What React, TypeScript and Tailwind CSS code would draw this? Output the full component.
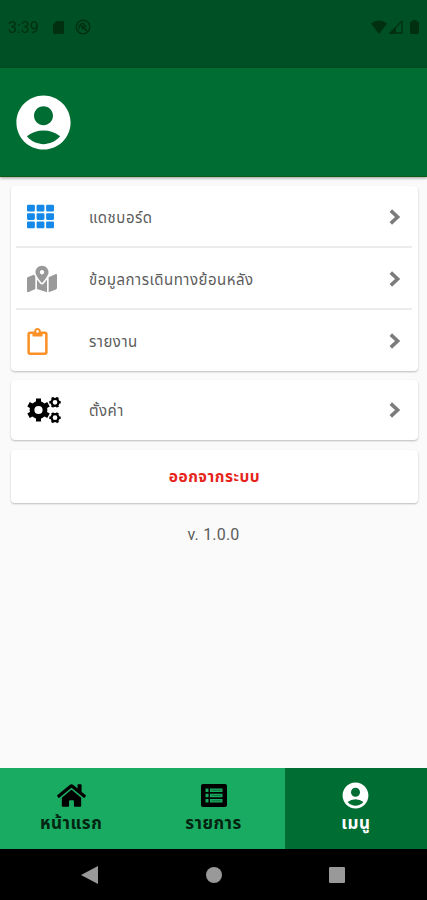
import type { ReactNode } from "react";
import { FaHome, FaMapMarkedAlt, FaRegClipboard, FaTh } from "react-icons/fa";
import { MdAccountCircle } from "react-icons/md";

type MenuRowProps = {
  icon: ReactNode;
  label: string;
  className: string;
};

function ChevronIcon() {
  return (
    <svg width="12" height="16" viewBox="0 0 12 16" fill="none" stroke="#7c7c7c" strokeWidth="3.600">
      <path d="M1.800 1.600L8.600 8l-6.800 6.400" />
    </svg>
  );
}

function GearsIcon() {
  return (
    <svg width="34" height="28" viewBox="0 0 34 28" fill="none" stroke="#000">
      <circle cx="11.500" cy="14" r="6.500" strokeWidth="4.800" />
      <g strokeWidth="5">
        <path d="M11.500 2.500v5M11.500 20.500v5" />
        <path d="M11.500 2.500v5M11.500 20.500v5" transform="rotate(60 11.500 14)" />
        <path d="M11.500 2.500v5M11.500 20.500v5" transform="rotate(120 11.500 14)" />
      </g>
      <circle cx="28" cy="6.300" r="3.500" strokeWidth="2.300" />
      <circle cx="28" cy="21.700" r="3.500" strokeWidth="2.300" />
      <g strokeWidth="2.600">
        <path d="M22.300 6.300h2M31.700 6.300h2M25.200 1.400l1 1.700M29.900 9.500l1 1.700M30.800 1.400l-1 1.700M26.100 9.500l-1 1.700" />
        <path d="M22.300 21.700h2M31.700 21.700h2M25.200 16.800l1 1.700M29.900 24.900l1 1.700M30.800 16.800l-1 1.700M26.100 24.900l-1 1.700" />
      </g>
    </svg>
  );
}

function ListIcon() {
  return (
    <svg width="26" height="23" viewBox="0 0 26 23" className="ml-[2px]">
      <rect width="26" height="23" rx="2" fill="#000" />
      <g fill="#1aab62">
        <path d="M4.500 4.500h3v3.500h-3zM4.500 9.700h3v3.500h-3zM4.500 15h3v3.500h-3z" />
        <path d="M9 4.500h12.500v3.500h-12.500zM9 9.700h12.500v3.500h-12.500zM9 15h12.500v3.500h-12.500z" />
      </g>
      <path d="M10.500 6.250h9.500M10.500 11.450h9.500M10.500 16.750h9.500" stroke="#087538" strokeWidth="1" />
    </svg>
  );
}

function MenuRow({ icon, label, className }: MenuRowProps) {
  return (
    <button className={`flex w-full items-center pt-px text-left ${className}`}>
      <span className="flex w-[62px] shrink-0 items-center">{icon}</span>
      <span className="flex-1 pt-[2px] text-[15px] leading-6 tracking-[0.500px] text-[#5c5c5c]">{label}</span>
      <ChevronIcon />
    </button>
  );
}

function StatusBar() {
  return (
    <div className="flex h-[68px] items-start bg-[#005025] px-2 pt-[18px] text-[#00300f]">
      <span className="w-[45px] text-[16px] leading-5">3:39</span>
      <svg width="11" height="13" viewBox="0 0 12 14" className="mt-[3px]" fill="currentColor">
        <path d="M4 0h6.500A1.500 1.500 0 0 1 12 1.500v11a1.500 1.500 0 0 1-1.500 1.500h-9A1.500 1.500 0 0 1 0 12.500V4z" />
      </svg>
      <svg width="16" height="16" viewBox="0 0 16 16" className="ml-[11px] mt-px" fill="none" stroke="currentColor">
        <circle cx="8" cy="8" r="6.800" strokeWidth="1.300" />
        <path d="M4 10.500c-.5-3 1-5.500 4-6.500l3.500 4" strokeWidth="1.300" />
        <path d="M5 5.500l7 6.500M7 10l2-3" strokeWidth="1.800" />
      </svg>
      <div className="ml-auto flex items-center gap-[2px] pt-[2px]">
        <svg width="16" height="14" viewBox="0 0 16 14" fill="currentColor">
          <path d="M0 3.500Q8-2.500 16 3.500L8 14z" />
        </svg>
        <svg width="14" height="14" viewBox="0 0 14 14">
          <path d="M1 13L13 1v12z" fill="none" stroke="currentColor" strokeWidth="1.300" />
          <path d="M0 14L7 7v7z" fill="currentColor" />
        </svg>
        <svg width="9" height="14" viewBox="0 0 9 14" fill="currentColor" className="ml-[5px]">
          <path d="M2.500 0h4v1.500H8a1 1 0 0 1 1 1V13a1 1 0 0 1-1 1H1a1 1 0 0 1-1-1V2.500a1 1 0 0 1 1-1h1.500z" />
        </svg>
      </div>
    </div>
  );
}

export default function App() {
  return (
    <div className="flex h-[900px] w-[427px] flex-col overflow-hidden bg-[#fafafa] font-['Roboto','Noto_Sans_Thai','Noto_Sans',sans-serif]">
      <StatusBar />

      <header className="flex h-[109px] shrink-0 items-center border-b border-[#0b5c10] bg-[#006d32] pl-[11px] text-white shadow-[0_1px_3px_rgba(0,0,0,0.4)]">
        <MdAccountCircle size={65} />
      </header>

      <main className="flex flex-1 flex-col pl-[11px] pr-[9px] pt-[9px]">
        <section className="h-[185px] rounded-[4px] bg-white pl-[5px] pr-[6px] shadow-[0_1px_2px_rgba(0,0,0,0.25)]">
          <MenuRow
            className="h-[62px] border-b-2 border-[#ececec] px-[11px]"
            icon={<FaTh size={27} className="text-[#1588e8]" />}
            label="แดชบอร์ด"
          />
          <MenuRow
            className="h-[62px] border-b-2 border-[#ececec] px-[11px]"
            icon={<FaMapMarkedAlt size={30} className="text-[#999999]" />}
            label="ข้อมูลการเดินทางย้อนหลัง"
          />
          <MenuRow
            className="h-[61px] px-[11px]"
            icon={<FaRegClipboard size={27} className="-ml-[3px] text-[#fb9027]" />}
            label="รายงาน"
          />
        </section>

        <section className="mt-[9px] h-[60px] rounded-[4px] bg-white pl-[5px] pr-[6px] shadow-[0_1px_2px_rgba(0,0,0,0.25)]">
          <MenuRow className="h-[58px] px-[11px]" icon={<GearsIcon />} label="ตั้งค่า" />
        </section>

        <button className="mt-[10px] h-[53px] rounded-[4px] bg-white pt-[3px] text-[15.500px] font-bold tracking-[0.500px] text-[#e5231b] shadow-[0_1px_2px_rgba(0,0,0,0.25)]">
          ออกจากระบบ
        </button>

        <p className="mt-[20px] pr-[2px] text-center text-[16px] leading-6 tracking-[0.200px] text-[#5c5c5c]">v. 1.0.0</p>
      </main>

      <nav className="grid h-[81px] shrink-0 grid-cols-3 text-[17px] font-bold leading-6 tracking-[0.500px] text-[#032411]">
        <button className="flex flex-col items-center justify-start bg-[#1aab62] pt-3">
          <span className="flex h-[31px] items-center">
            <FaHome size={29} className="text-black" />
          </span>
          <span>หน้าแรก</span>
        </button>
        <button className="flex flex-col items-center justify-start bg-[#1aab62] pt-3">
          <span className="flex h-[31px] items-center">
            <ListIcon />
          </span>
          <span>รายการ</span>
        </button>
        <button className="flex flex-col items-center justify-start bg-[#006d32] pt-3 text-white">
          <MdAccountCircle size={31} />
          <span>เมนู</span>
        </button>
      </nav>

      <div className="flex h-[51px] shrink-0 items-center justify-between bg-black pl-[81px] pr-[82px] text-[#999999]">
        <svg width="17" height="18" viewBox="0 0 17 18" fill="currentColor">
          <path d="M17 0v18L0 9z" />
        </svg>
        <span className="size-4 rounded-full bg-[#999999]" />
        <span className="size-4 rounded-[1px] bg-[#999999]" />
      </div>
    </div>
  );
}
